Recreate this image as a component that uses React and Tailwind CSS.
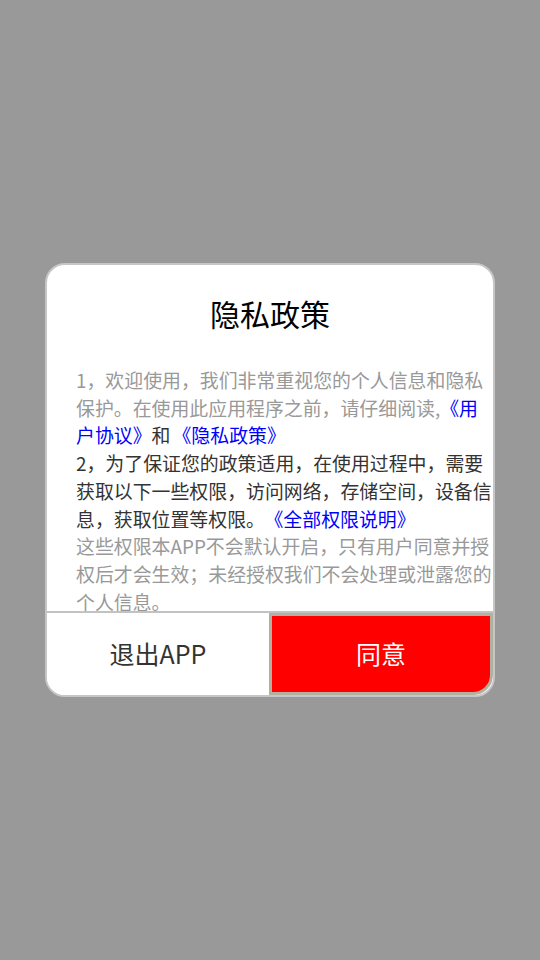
// App.jsx — privacy policy consent dialog
const FONT = { fontFamily: '"Noto Sans CJK SC", "Noto Sans", sans-serif' }

export default function App() {
  return (
    <div className="min-h-screen w-full bg-[#999999] flex items-center justify-center" style={FONT}>
      <div className="w-[450px] h-[434px] bg-white border-2 border-[#c6c6c6] rounded-[20px] overflow-hidden flex flex-col">

        {/* título */}
        <h1 className="pt-[27px] text-[30px] leading-[42px] text-center text-black">隐私政策</h1>

        {/* texto */}
        <div className="flex-1 min-h-0 overflow-hidden mt-[32px] pl-[29px] text-[18.9px] leading-[27.7px]">
          <p className="text-[#999999]">
            1，欢迎使用，我们非常重视您的个人信息和隐私保护。在使用此应用程序之前，请仔细阅读,
            <span className="text-[#0000ff]">《用户协议》</span>
            <span className="text-[#333333]">和</span>
            <span className="text-[#0000ff] pl-[2px]">《隐私政策》</span>
          </p>
          <p className="text-[#333333]">
            2，为了保证您的政策适用，在使用过程中，需要获取以下一些权限，访问网络，存储空间，设备信息，获取位置等权限。
            <span className="text-[#0000ff] pl-[9px]">《全部权限说明》</span>
          </p>
          <p className="text-[#999999]">
            这些权限本APP不会默认开启，只有用户同意并授权后才会生效；未经授权我们不会处理或泄露您的个人信息。
          </p>
        </div>

        {/* botones */}
        <div className="h-[84px] shrink-0 border-t-2 border-[#c2c2c2] flex">
          <button className="w-[222px] bg-white text-[#333333] text-[25px]">退出APP</button>
          <button className="flex-1 bg-[#ff0000] border-[3px] border-[#b3b0a2] rounded-br-[20px] text-white text-[25px]">
            同意
          </button>
        </div>
      </div>
    </div>
  )
}
